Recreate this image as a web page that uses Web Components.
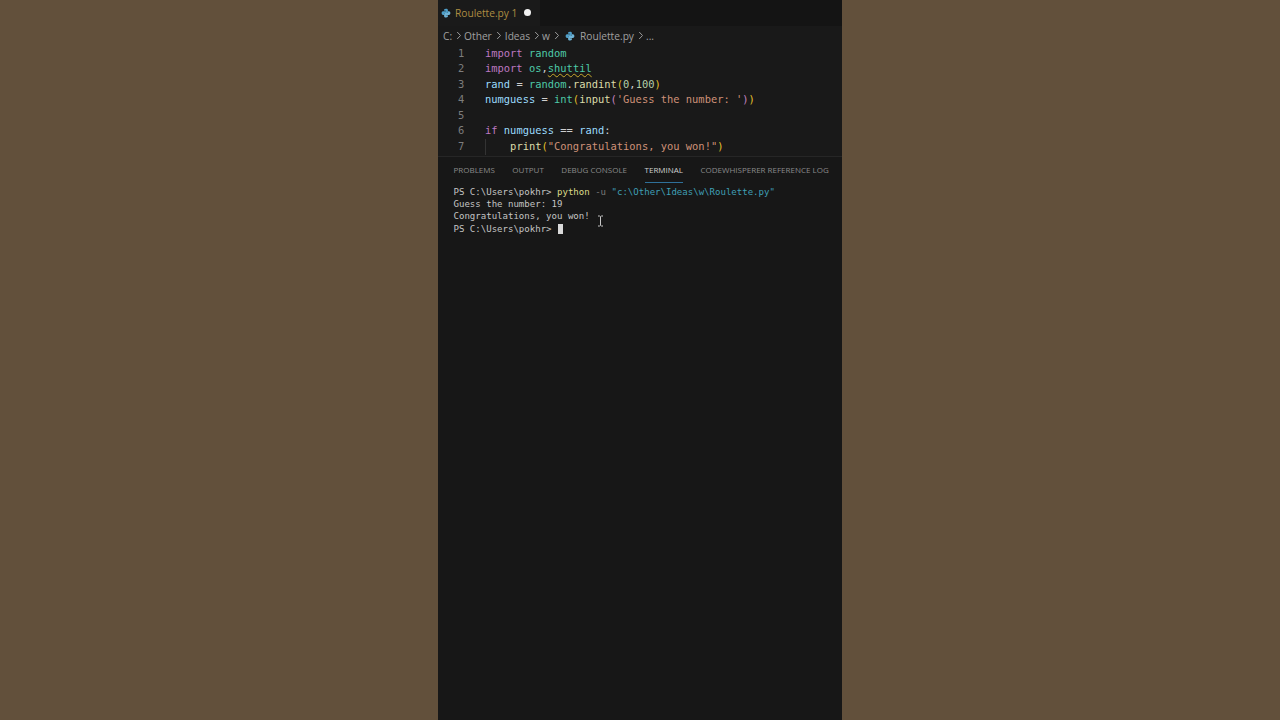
<!DOCTYPE html>
<html><head><meta charset="utf-8"><style>
html,body{margin:0;height:100%;background:#62503b;overflow:hidden}
body{display:flex;justify-content:center}
</style></head><body>
<vs-window></vs-window>
<template id="t-window"><style>
:host{display:flex;flex-direction:column;width:404px;height:720px;background:#191919}
</style><vs-tabbar></vs-tabbar><vs-crumbs></vs-crumbs><vs-editor></vs-editor><vs-panel></vs-panel></template>
<script>
const PY=`<svg width="10" height="10" viewBox="0 0 16 16"><path fill="#4f9fc9" d="M8 1C5 1 5 2.300 5 3v1.500h3.200V5H3.200C1.800 5 1 6.300 1 8s.8 3 2.200 3H5V9.500C5 8.500 5.800 8 6.800 8h2.700C10.500 8 11 7.300 11 6.500V3c0-1.200-1.200-2-3-2z"/><path fill="#6fb3d6" d="M8 15c3 0 3-1.300 3-2v-1.500H7.800V11h5C14.200 11 15 9.700 15 8s-.8-3-2.200-3H11v1.500c0 1-.8 1.500-1.800 1.500H6.500C5.500 8 5 8.700 5 9.500V13c0 1.200 1.200 2 3 2z"/></svg>`;
const CHEV=`<svg width="6" height="9" viewBox="0 0 6 9"><path d="M1.200 1l3.300 3.500L1.200 8" fill="none" stroke="#9a9a9a" stroke-width="1"/></svg>`;
function def(name,html){customElements.define(name,class extends HTMLElement{constructor(){super();this.attachShadow({mode:'open'}).innerHTML=html;}});}
customElements.define('vs-window',class extends HTMLElement{constructor(){super();this.attachShadow({mode:'open'}).appendChild(document.getElementById('t-window').content.cloneNode(true));}});
def('vs-tabbar',`<style>
:host{display:flex;height:26px;background:#141414;flex:none;font:10.200px "Open Sans","Noto Sans",sans-serif}
.tab{display:flex;align-items:center;width:102px;box-sizing:border-box;height:26px;background:#1a1a1a;padding-left:3px;gap:4px;color:#ad8d42}
.tab svg{flex:none}
.name{white-space:nowrap}
.dot{width:7px;height:7px;border-radius:50%;background:#f2f2f2;margin-left:3px;margin-top:-1px;flex:none}
</style><div class="tab">${PY}<span class="name">Roulette.py 1</span><span class="dot"></span></div>`);
def('vs-crumbs',`<style>
:host{display:flex;align-items:center;height:19.600px;padding-left:5px;gap:4px;flex:none;color:#a0a0a0;font:10.200px "Open Sans","Noto Sans",sans-serif;white-space:nowrap}
svg{flex:none}
.py{display:flex;margin-left:1px;margin-right:1px}
.o,.e{margin-left:-2px}
.i{margin-left:-1px}
.w{margin-left:-2px}
</style><span>C:</span>${CHEV}<span class="o">Other</span>${CHEV}<span class="i">Ideas</span>${CHEV}<span class="w">w</span>${CHEV}<span class="py">${PY}</span><span>Roulette.py</span>${CHEV}<span class="e">...</span>`);
const k='#bd78c0',g='#4ec9a8',w='#cfcfcf',b='#9cdcfe',f='#dcdcaa',y='#e5c02a',s='#ce9178',n='#b5cea8',p='#c586c0';
const c=(col,t)=>`<span style="color:${col}">${t}</span>`;
const lines=[
 c(k,'import')+' '+c(g,'random'),
 c(k,'import')+' '+c(g,'os')+c(w,',')+'<span class="sq">'+c(g,'shuttil')+'</span>',
 c(b,'rand')+c(w,' = ')+c(g,'random')+c(w,'.')+c(f,'randint')+c(y,'(')+c(n,'0')+c(w,',')+c(n,'100')+c(y,')'),
 c(b,'numguess')+c(w,' = ')+c(g,'int')+c(y,'(')+c(f,'input')+c(p,'(')+c(s,"'Guess the number: '")+c(p,')')+c(y,')'),
 '',
 c(k,'if')+' '+c(b,'numguess')+c(w,' == ')+c(b,'rand')+c(w,':'),
 '<span class="guide"></span>    '+c(f,'print')+c(y,'(')+c(s,'"Congratulations, you won!"')+c(y,')')
];
def('vs-editor',`<style>
:host{display:block;height:110.400px;flex:none;overflow:hidden;font:10.430px/15.580px "DejaVu Sans Mono","Liberation Mono",monospace}
.l{display:flex;height:15.580px;white-space:pre}
.n{width:47px;flex:none;box-sizing:border-box;padding-left:20px;color:#7d7d7d}
.sq{text-decoration:underline wavy #c8a92c 1px;text-underline-offset:1px}
.c{position:relative}
.guide{position:absolute;left:0;top:0;bottom:0;width:1px;background:#333}
</style>${lines.map((h,i)=>`<div class="l"><span class="n">${i+1}</span><span class="c">${h}</span></div>`).join('')}`);
def('vs-panel',`<style>
:host{display:flex;flex-direction:column;flex:1;min-height:0;background:#171717;border-top:1px solid #262626;font:8px "Open Sans","Noto Sans",sans-serif}
nav{display:flex;height:27px;padding-left:15.500px;gap:17.500px;color:#8a8a8a;white-space:nowrap;flex:none}
nav span{display:block;box-sizing:border-box;height:23px;margin-top:3px;padding-top:4px;line-height:11px}
nav .a{color:#d0d0d0;border-bottom:1px solid #2f7099}
.t{padding:2px 0 0 15.500px;font:9.060px/12.200px "DejaVu Sans Mono","Liberation Mono",monospace;color:#c4c4c4;position:relative}
.t div{height:12.200px;white-space:pre}
.cmd{color:#dcdc8a}.flag{color:#7a7a7a}.str{color:#3f9fb5}
.cur{display:inline-block;width:5px;height:10px;background:#d9d9d9;vertical-align:-2px;margin-left:1px}
svg{position:absolute;left:159px;top:31px}
</style><nav><span>PROBLEMS</span><span>OUTPUT</span><span>DEBUG CONSOLE</span><span class="a">TERMINAL</span><span>CODEWHISPERER REFERENCE LOG</span></nav>
<div class="t"><div>PS C:\\Users\\pokhr&gt; <span class="cmd">python</span> <span class="flag">-u</span> <span class="str">"c:\\Other\\Ideas\\w\\Roulette.py"</span></div><div>Guess the number: 19</div><div>Congratulations, you won!</div><div>PS C:\\Users\\pokhr&gt; <span class="cur"></span></div><svg width="7" height="12" viewBox="0 0 7 12"><path d="M1 1h1.500l1 .7 1-.7H6M3.500 1.700v8.600M1 11h1.500l1-.7 1 .7H6" fill="none" stroke="#c8c8c8" stroke-width="1"/></svg></div>`);
</script></body></html>
